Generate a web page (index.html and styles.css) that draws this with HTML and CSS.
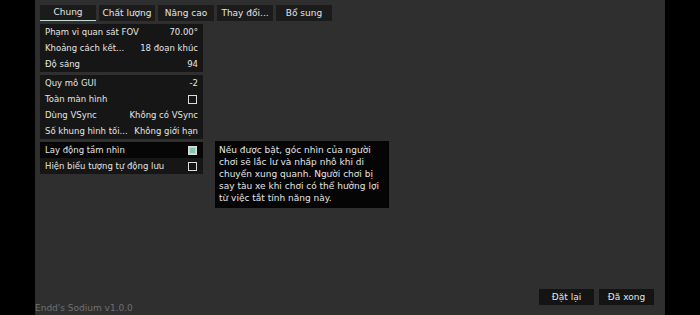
FILE: index.html
```html
<!DOCTYPE html>
<html>
  <head>
    <title>Tùy chọn video</title>
    <link rel="stylesheet" href="styles.css">
  </head>
  <body>
    <div class="screen">
      <div class="tabs">
        <div class="tab active">Chung</div>
        <div class="tab">Chất lượng</div>
        <div class="tab">Nâng cao</div>
        <div class="tab">Thay đổi...</div>
        <div class="tab">Bổ sung</div>
      </div>

      <div class="options">
        <div class="group">
          <div class="row"><span>Phạm vi quan sát FOV</span><span>70.00°</span></div>
          <div class="row"><span>Khoảng cách kết...</span><span>18 đoạn khúc</span></div>
          <div class="row"><span>Độ sáng</span><span>94</span></div>
        </div>
        <div class="group">
          <div class="row"><span>Quy mô GUI</span><span>-2</span></div>
          <div class="row"><span>Toàn màn hình</span><span class="check"></span></div>
          <div class="row"><span>Dùng VSync</span><span>Không có VSync</span></div>
          <div class="row"><span>Số khung hình tối...</span><span>Không giới hạn</span></div>
        </div>
        <div class="group">
          <div class="row hovered"><span>Lay động tầm nhìn</span><span class="check on"></span></div>
          <div class="row"><span>Hiện biểu tượng tự động lưu</span><span class="check"></span></div>
        </div>
      </div>

      <div class="tooltip">
        Nếu được bật, góc nhìn của người chơi sẽ lắc lư và nhấp nhô khi di chuyển xung quanh. Người chơi bị say tàu xe khi chơi có thể hưởng lợi từ việc tắt tính năng này.
      </div>

      <div class="footer">
        <div class="version">Endd's Sodium v1.0.0</div>
        <div class="buttons">
          <div class="btn">Đặt lại</div>
          <div class="btn">Đã xong</div>
        </div>
      </div>
    </div>
  </body>
</html>
```

FILE: styles.css
```css
html,
body {
  height: 100%;
}
body {
  margin: 0;
  background-color: #000;
  font-family: "DejaVu Sans", sans-serif;
  font-size: 9px;
  color: #e4e4e4;
}
.screen {
  position: relative;
  width: 630px;
  height: 315px;
  margin-left: 35px;
  background-color: #2f2f2f;
  display: flex;
  flex-direction: column;
}
.tabs {
  display: flex;
  gap: 3px;
  padding: 5px 0 0 5px;
}
.tab {
  width: 56px;
  height: 16px;
  line-height: 16px;
  text-align: center;
  background-color: #1b1b1b;
  box-sizing: border-box;
  white-space: nowrap;
}
.tab.active {
  border-bottom: 1px solid #c4dcd4;
  line-height: 15px;
}
.options {
  display: flex;
  flex-direction: column;
  gap: 3px;
  width: 163px;
  margin: 3px 0 0 5px;
  font-size: 8.5px;
}
.group {
  background-color: #161616;
}
.row {
  height: 16px;
  padding: 0 5px;
  display: flex;
  justify-content: space-between;
  align-items: center;
  white-space: nowrap;
}
.row.hovered {
  background-color: #060606;
}
.check {
  width: 7px;
  height: 7px;
  border: 1px solid #dcdcdc;
  margin-right: 1px;
}
.check.on {
  background-color: #7fc7a8;
  box-shadow: inset 0 0 0 1px #a8e0c8;
}
.tooltip {
  position: absolute;
  left: 180px;
  top: 141px;
  width: 166px;
  padding: 3px 4px 4px;
  background-color: #050505;
  line-height: 12px;
}
.footer {
  margin-top: auto;
  display: flex;
  justify-content: space-between;
  align-items: flex-end;
  padding-right: 11px;
}
.version {
  color: #707070;
  padding-bottom: 2px;
}
.buttons {
  display: flex;
  gap: 5px;
  margin-bottom: 10px;
}
.btn {
  width: 55px;
  height: 16px;
  line-height: 16px;
  text-align: center;
  background-color: #141414;
}
```
